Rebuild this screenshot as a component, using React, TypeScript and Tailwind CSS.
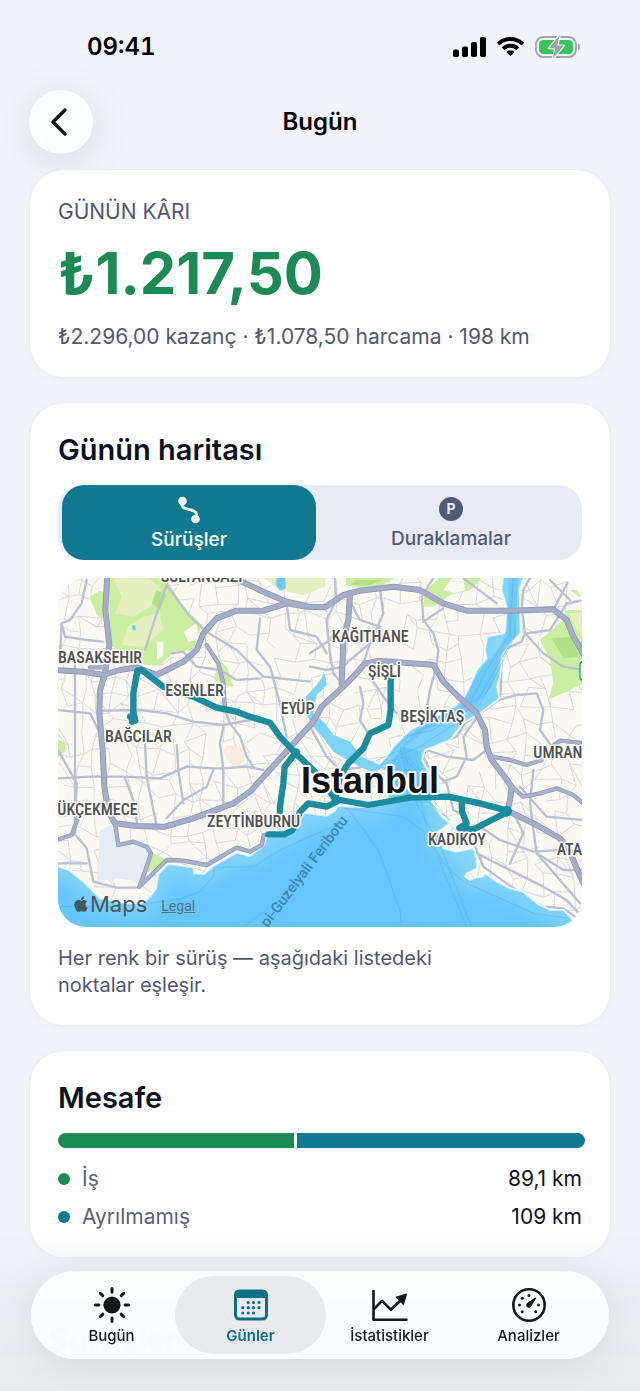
import { FaApple } from "react-icons/fa";

type Road = { d: string };

// Map drawing units: three per pixel of the map panel at its natural width.
const HIGHWAYS: Road[] = [
  { d: "M172 10L166 120L178 225L165 310L150 360L148 430L158 540L163 650L175 725L195 760L260 768L345 770L430 745L550 700L600 665L650 610L700 555L740 510L790 455L815 410L880 350L910 320L945 280L985 273L1150 284L1180 335L1220 375L1280 430L1305 480L1310 530L1325 570L1360 615L1385 650L1380 690L1372 722L1460 765L1530 805L1560 845L1580 895L1600 940" },
  { d: "M10 300L100 305L160 315L210 300L260 292L320 315L400 275L440 240L460 190L500 145L560 122L640 122L710 100L770 110L825 112L880 75L930 62L1030 50L1110 60L1180 100L1250 122L1380 122L1510 118L1550 150L1570 200L1600 250" },
  { d: "M560 28L640 65L710 95L770 108" },
  { d: "M900 70L895 150L880 210L875 340" },
];

const MAIN_ROADS: Road[] = [
  { d: "M470 225L505 280L520 340L525 420" },
  { d: "M1385 650L1420 680L1470 670L1520 655L1570 675L1600 700" },
  { d: "M1325 560L1380 570L1430 585L1475 570" },
  { d: "M195 760L205 825L250 815L290 830L303 850L285 905L268 950L350 870L400 872L470 885L560 833L600 845L635 825L642 795" },
  { d: "M20 810L65 795L85 740" },
  { d: "M1505 530L1530 512L1560 515L1600 520" },
  { d: "M120 292L165 292L165 325" },
];

const STREETS: Road[] = [
  { d: "M350 45L320 130L285 240" },
  { d: "M350 45L420 140L470 185L560 240L640 320L780 335" },
  { d: "M75 268V793L110 835L130 935L200 953L265 953" },
  { d: "M24 625L120 620L225 620L330 625L410 590L490 595L520 595L590 590L640 600" },
  { d: "M350 745L400 690L470 650L490 600" },
  { d: "M225 625L250 690L262 765" },
  { d: "M525 420L540 460L570 500L590 560L610 590" },
  { d: "M158 422L270 420L350 430L430 455L520 465L600 450" },
  { d: "M365 250L400 245L440 290L510 300L560 330L630 325" },
  { d: "M285 520L290 620L310 720L320 770" },
  { d: "M380 525L385 600L400 700" },
  { d: "M35 160L45 200L110 210L160 215" },
  { d: "M110 30L95 100L60 150L35 160L30 260" },
  { d: "M520 470L510 520L520 600L520 700" },
  { d: "M630 145L620 240L660 290L690 400L710 500" },
  { d: "M710 100L720 180L800 200L830 250" },
  { d: "M855 24L858 90L830 150L840 250L850 310L880 345" },
  { d: "M990 60L1000 130L960 220L900 270L880 290" },
  { d: "M900 95L930 150L990 170L960 220L940 280" },
  { d: "M1150 24L1115 80L1120 150L1150 190L1165 240L1160 285L1140 360L1125 450L1070 520" },
  { d: "M1120 155L1180 115" },
  { d: "M930 350L940 400L930 450L960 500" },
  { d: "M960 320L1000 380L1040 430" },
  { d: "M1440 24L1420 60L1415 110L1425 190L1415 215L1370 235L1355 265L1352 370L1345 390L1290 430L1245 460L1220 500L1130 535L1120 560L1135 590L1190 640L1210 720L1230 730" },
  { d: "M1425 190L1480 250L1540 290L1600 300" },
  { d: "M1430 190L1500 180L1550 100L1600 90" },
  { d: "M1345 390L1400 375L1460 370L1480 420L1470 480L1520 550" },
  { d: "M1290 430L1240 500L1250 560L1220 620L1180 635" },
  { d: "M1310 540L1270 570L1190 560L1130 540" },
  { d: "M1280 850L1400 910L1480 950L1550 990L1596 1040" },
  { d: "M1275 830L1300 890L1370 940L1440 990L1480 1010L1540 1015L1590 1050" },
  { d: "M1290 770L1350 810L1450 845L1530 840" },
  { d: "M1450 600L1440 700L1460 850L1540 900L1600 900" },
  { d: "M1460 850L1590 1000" },
  { d: "M1410 650L1490 740L1600 750" },
  { d: "M1390 725L1420 790L1380 880" },
  { d: "M24 420L120 430L150 490" },
  { d: "M24 540L80 640L75 780" },
  { d: "M24 880L110 880" },
  { d: "M780 250L840 210L850 190M780 290L830 300L880 290" },
  { d: "M780 470L830 560L870 600L950 590" },
  { d: "M1240 24L1340 100M1510 120L1560 24M1500 30L1560 90" },
];

// Deterministic mesh of side streets.
const SIDE_STREETS = (() => {
  let seed = 41;
  const rnd = () => {
    seed = (seed * 16807) % 2147483647;
    return seed / 2147483647;
  };
  const step = 46;
  const cols = 36;
  const rows = 25;
  const pts: number[][][] = [];
  for (let r = 0; r < rows; r++) {
    pts.push([]);
    for (let c = 0; c < cols; c++) {
      pts[r].push([
        Math.round(c * step + (rnd() - 0.5) * 38),
        Math.round(r * step + (rnd() - 0.5) * 38),
      ]);
    }
  }
  let d = "";
  for (let r = 0; r < rows - 1; r++) {
    for (let c = 0; c < cols - 1; c++) {
      const [x, y] = pts[r][c];
      if (rnd() < 0.68) d += `M${x} ${y}L${pts[r][c + 1][0]} ${pts[r][c + 1][1]}`;
      if (rnd() < 0.72) d += `M${x} ${y}L${pts[r + 1][c][0]} ${pts[r + 1][c][1]}`;
      if (rnd() < 0.12) d += `M${x} ${y}L${pts[r + 1][c + 1][0]} ${pts[r + 1][c + 1][1]}`;
    }
  }
  return d;
})();

const SEA =
  "M-80 870L20 888L60 902L100 935L150 985L200 995L270 1005L300 980L318 955L325 912L355 882L430 892L432 910L462 912L490 888L560 848L600 858L640 828L652 797L715 797L745 755L765 728L795 733L830 737L855 722L862 708L960 712L1010 690L1025 650L1020 610L980 590L1010 560L1030 530L1080 480L1150 442L1210 412L1240 388L1255 358L1280 300L1310 265L1305 240L1312 200L1365 190L1370 110L1355 60L1365 -40H1440L1408 60L1412 190L1370 230L1355 260L1350 320L1340 350L1348 385L1290 430L1240 458L1200 510L1125 540L1115 570L1140 615L1170 665L1145 695L1175 740L1200 760L1165 785L1180 835L1220 845L1270 835L1280 865L1280 895L1250 910L1245 920L1260 930L1280 922L1298 920L1305 910L1340 935L1380 955L1420 965L1460 1000L1500 1020L1540 1020L1565 1045L1640 1180H-80Z";

const GOLDEN_HORN =
  "M768 380L800 345L825 310L830 345L800 375L790 430L825 460L850 495L900 515L935 560L1000 590L970 610L900 575L850 545L825 510L790 470L768 430Z";

const ROUTES = [
  "M246 455L250 440L250 370L262 302L275 300L340 350L430 380L500 413L560 425L600 440L660 458L690 500L735 548L800 610L857 690",
  "M240 440L256 452L250 425",
  "M740 545L704 590L700 640L690 710L688 765",
  "M655 793H705L728 780L735 765L750 725L775 700L830 710L870 690L955 705L1040 690L1080 683L1195 680L1290 700L1372 722",
  "M1235 695L1236 725L1250 760L1228 774L1270 778L1372 726",
  "M1022 320L1022 420L1015 465L960 490L940 535L925 550L895 580L870 620L855 690",
];

const DISTRICTS = [
  { name: "SULTANGAZI", x: 332, y: 37 },
  { name: "BASAKSEHIR", x: 24, y: 278 },
  { name: "ESENLER", x: 346, y: 379 },
  { name: "BAĞCILAR", x: 165, y: 517 },
  { name: "EYÜP", x: 692, y: 432 },
  { name: "KAĞITHANE", x: 845, y: 217 },
  { name: "ŞİŞLİ", x: 954, y: 320 },
  { name: "BEŞİKTAŞ", x: 1051, y: 457 },
  { name: "UMRAN", x: 1450, y: 565 },
  { name: "ATA", x: 1520, y: 855 },
  { name: "ÜKÇEKMECE", x: 22, y: 736 },
  { name: "ZEYTİNBURNU", x: 471, y: 771 },
  { name: "KADIKOY", x: 1134, y: 825 },
];

function DayMap() {
  return (
    <svg viewBox="24 24 1572 1047" className="block w-full" role="img" aria-label="Istanbul">
      <defs>
        <linearGradient id="sea" x1="0" y1="0" x2="0.3" y2="1">
          <stop offset="0" stopColor="#66c5f9" />
          <stop offset="1" stopColor="#67c6fc" />
        </linearGradient>
        <clipPath id="sea-clip">
          <path d={SEA} />
        </clipPath>
        <filter id="shallow" x="-10%" y="-10%" width="120%" height="120%">
          <feGaussianBlur stdDeviation="28" />
        </filter>
      </defs>
      <rect x="0" y="0" width="1620" height="1100" fill="#fafaf2" />
      <path d={SIDE_STREETS} fill="none" stroke="#d3d1dc" strokeWidth="2.5" />

      <path d="M530 525L575 530L585 570L560 590L535 575L520 545Z" fill="#fbeade" />
      <path d="M150 780L190 762L205 825L292 832L300 850L270 935L200 925L140 935Z" fill="#e6ecf6" />
      <g fill="#cbefa0">
        <path d="M176 20H345L400 110L455 165L430 240L370 245L330 288L290 285L240 265L180 225Z" />
        <path d="M120 80L150 62L172 70L168 150L140 135Z" />
        <path d="M500 265L530 290L550 350L495 345Z" />
        <path d="M888 45V20H1040L1000 45L930 55Z" />
        <path d="M1120 110L1125 65L1170 20H1300L1260 60L1200 75L1150 110Z" />
        <path d="M1470 210L1540 150L1550 120L1600 120V340L1540 370L1495 388L1510 340L1500 270Z" />
        <path d="M24 510L46 515L46 545L24 560Z" />
        <path d="M305 847L350 870L285 915Z" />
        <path d="M1560 60L1600 90V60Z" />
      </g>
      <g fill="#e5efc0">
        <path d="M190 24H300L335 60L300 110L250 140L195 130L215 80Z" />
        <path d="M640 24H825V50L760 75L690 60Z" />
        <path d="M280 140L330 130L340 180L280 230L215 225L235 170Z" />
        <path d="M1555 130L1600 125V190L1580 180Z" />
        <path d="M780 24H830L800 55L780 60Z" />
      </g>
      <g fill="#aee284">
        <path d="M320 60L350 75L330 120L305 100Z" />
        <path d="M1505 205L1560 200L1590 260L1540 265Z" />
        <path d="M900 45L920 30L1000 30L960 45Z" />
      </g>
      <path d="M400 185L440 160L445 210L415 215ZM320 215L340 215V255L322 270Z M1180 60L1205 25L1240 24L1245 60L1215 70Z" fill="#fafaf2" />
      <path d="M246 168L256 164V182L248 180ZM680 20H705L708 55L690 62L678 45Z" fill="#6cc8f8" />

      <g fill="none" stroke="#bcbfd2" strokeLinejoin="round" strokeLinecap="round" strokeWidth="7">
        {STREETS.map((road) => (
          <path key={road.d} d={road.d} />
        ))}
      </g>

      <path d={SEA} fill="url(#sea)" stroke="#ffffff" strokeWidth="6" strokeLinejoin="round" />
      <g clipPath="url(#sea-clip)">
        <path d={SEA} fill="none" stroke="#94dff9" strokeWidth="56" opacity="0.7" filter="url(#shallow)" />
      </g>
      <path d={GOLDEN_HORN} fill="#7bd3f8" />
      <path d="M1588 220L1600 210V270L1586 250Z" fill="#7bd3f8" />
      <g fill="#59bbf5" opacity="0.45">
        <path d="M1375 24H1405L1395 110L1398 195L1350 260L1325 350L1270 415L1130 480L1050 540L1100 480L1230 410L1290 300L1350 230L1372 180Z" />
        <path d="M1025 570L1060 530L1110 545L1120 600L1160 670L1100 660L1040 650Z" />
      </g>
      <g fill="none" stroke="#4ea3d3" strokeWidth="2" opacity="0.55">
        <path d="M1390 24L1380 190L1310 300L1260 400L1060 510L990 590" />
        <path d="M1400 60L1395 200L1330 330L1280 420L1110 530L1040 560" />
        <path d="M1375 120L1385 210L1290 380L1150 480L1060 500" />
        <path d="M960 580L1050 540L1110 600L1150 690L1200 755" />
        <path d="M1050 530L1080 640L1115 700L1130 780L1250 1071" />
        <path d="M1060 530L1100 700L1180 850L1265 1071" />
        <path d="M870 705L900 725L985 840L1050 1020L1055 1071" />
        <path d="M885 715L1060 740L1130 790L1180 880L1240 935L1450 1030L1560 1045" />
        <path d="M500 892L610 890L700 835L870 760" />
        <path d="M580 1071L700 980L885 725" />
        <path d="M24 1010L200 1010L380 990L450 965L490 920L492 888" />
        <path d="M980 590L1060 560L1130 640L1170 690M1010 600L1130 690L1200 750" />
      </g>

      <g fill="none" strokeLinejoin="round" strokeLinecap="round">
        {MAIN_ROADS.map((road) => (
          <path key={road.d} d={road.d} stroke="#8e96b5" strokeWidth="13" />
        ))}
        {HIGHWAYS.map((road) => (
          <path key={road.d} d={road.d} stroke="#8e96b5" strokeWidth="18" />
        ))}
        {MAIN_ROADS.map((road) => (
          <path key={road.d} d={road.d} stroke="#a9b0ca" strokeWidth="9" />
        ))}
        {HIGHWAYS.map((road) => (
          <path key={road.d} d={road.d} stroke="#a5adc9" strokeWidth="13" />
        ))}
      </g>

      <g fill="none" stroke="#1a8c9d" strokeWidth="19" strokeLinejoin="round" strokeLinecap="round">
        {ROUTES.map((d) => (
          <path key={d} d={d} />
        ))}
      </g>
      <circle cx="1370" cy="724" r="16" fill="#1a8c9d" />
      <rect x="1590" y="276" width="30" height="54" rx="8" fill="#ffffff" stroke="#1c9c84" strokeWidth="4" />

      <g
        className="font-['Roboto_Condensed','Roboto',sans-serif] font-medium [paint-order:stroke]"
        fill="#4f5154"
        stroke="#fbfbf6"
        strokeWidth="9"
        strokeLinejoin="round"
        fontSize="48"
      >
        {DISTRICTS.map((place) => (
          <text key={place.name} x={place.x} y={place.y}>
            {place.name}
          </text>
        ))}
      </g>
      <text
        x="895"
        y="752"
        textAnchor="end"
        transform="rotate(-53 895 752)"
        className="font-['Roboto',sans-serif] font-medium"
        fontSize="44"
        fill="#3c86b3"
      >
        pi-Guzelyali Feribotu
      </text>
      <text
        x="960"
        y="670"
        textAnchor="middle"
        className="font-['Liberation_Sans',sans-serif] font-bold [paint-order:stroke]"
        fontSize="108"
        fill="#131313"
        stroke="#ffffff"
        strokeWidth="12"
        strokeLinejoin="round"
      >
        Istanbul
      </text>
    </svg>
  );
}

function StatusBar() {
  return (
    <div className="flex h-[90px] items-center justify-between pt-1 pr-[59px] pl-[87px]">
      <time className="text-2xl font-semibold tabular-nums">09:41</time>
      <div className="flex items-center gap-[11px]">
        <svg width="33" height="20" viewBox="0 0 33 20" aria-hidden="true">
          <rect x="0" y="12.5" width="6" height="7.5" rx="1.8" />
          <rect x="9" y="9.5" width="6" height="10.5" rx="1.8" />
          <rect x="18" y="5" width="6" height="15" rx="1.8" />
          <rect x="27" y="0" width="6" height="20" rx="1.8" />
        </svg>
        <svg width="27" height="20" viewBox="0 0 27 20" aria-hidden="true">
          <path d="M13.5 0C8.4 0 3.700 1.950 .3 5.200c-.3.300-.3.700 0 1l1.800 1.800c.3.300.7.300 1 0 2.800-2.600 6.400-4 10.400-4s7.600 1.400 10.400 4c.3.300.7.300 1 0l1.800-1.800c.3-.3.300-.7 0-1C23.300 1.950 18.600 0 13.500 0Z" />
          <path d="M13.500 6.800c-3.200 0-6.100 1.200-8.300 3.200-.3.300-.3.700 0 1l1.900 1.800c.3.300.7.300 1 0 1.500-1.300 3.300-2 5.400-2s3.900.7 5.400 2c.3.300.7.300 1 0l1.900-1.800c.3-.3.300-.7 0-1-2.200-2-5.100-3.200-8.300-3.200Z" />
          <path d="M13.500 13.300c-1.400 0-2.600.4-3.600 1.200-.4.300-.4.700-.1 1l3.200 3.300c.3.300.7.300 1 0l3.200-3.300c.3-.3.300-.7-.1-1-1-.8-2.200-1.200-3.600-1.200Z" />
        </svg>
        <svg width="46" height="24" viewBox="0 0 46 24" aria-hidden="true">
          <rect x="1" y="2" width="40" height="20" rx="7" fill="none" stroke="#a2a4a9" strokeWidth="1.800" />
          <path d="M43 8.500c1.500.6 2.200 2 2.200 3.500s-.7 2.900-2.200 3.500Z" fill="#a2a4a9" />
          <rect x="4" y="5" width="34" height="14" rx="4.500" fill="#35c759" />
          <path
            d="M24.500.5L14 13.200h6.300L18 23.500 28.800 10.600h-6.500Z"
            fill="#9fa3a5"
            stroke="#f2f3fb"
            strokeWidth="2.400"
            strokeLinejoin="round"
            className="[paint-order:stroke]"
          />
        </svg>
      </div>
    </div>
  );
}

const CARD =
  "rounded-[34px] bg-white px-7 shadow-[0_0_0_1px_#ecedf2,0_2px_10px_rgba(20,24,60,0.03)]";

const DISTANCES = [
  { label: "İş", value: "89,1 km", dot: "bg-[#1b8a54]" },
  { label: "Ayrılmamış", value: "109 km", dot: "bg-[#10798f]" },
];

function SunIcon() {
  return (
    <svg width="36" height="36" viewBox="0 0 36 36" aria-hidden="true">
      <circle cx="18" cy="18" r="8.600" fill="currentColor" />
      <g stroke="currentColor" strokeWidth="3" strokeLinecap="round">
        <path d="M18 1.500v3.400M18 31.100v3.400M1.500 18h3.400M31.100 18h3.400M6.300 6.300l2.500 2.500M27.200 27.200l2.500 2.500M6.300 29.700l2.500-2.500M27.200 8.800l2.500-2.500" />
      </g>
    </svg>
  );
}

function CalendarIcon() {
  return (
    <svg width="36" height="36" viewBox="0 0 36 36" aria-hidden="true">
      <rect x="2.500" y="4" width="31" height="28" rx="4" fill="none" stroke="currentColor" strokeWidth="3" />
      <path d="M2 11V7a4 4 0 0 1 4-4h24a4 4 0 0 1 4 4v4Z" fill="currentColor" />
      <g fill="currentColor">
        <circle cx="15.200" cy="15.500" r="1.600" />
        <circle cx="20.500" cy="15.500" r="1.600" />
        <circle cx="26" cy="15.500" r="1.600" />
        <circle cx="9.800" cy="20.700" r="1.600" />
        <circle cx="15.200" cy="20.700" r="1.600" />
        <circle cx="20.500" cy="20.700" r="1.600" />
        <circle cx="26" cy="20.700" r="1.600" />
        <circle cx="9.800" cy="26" r="1.600" />
        <circle cx="15.200" cy="26" r="1.600" />
        <circle cx="20.500" cy="26" r="1.600" />
      </g>
    </svg>
  );
}

function TrendIcon() {
  return (
    <svg width="38" height="36" viewBox="0 0 38 36" fill="none" aria-hidden="true">
      <g stroke="currentColor" strokeWidth="2.600" strokeLinecap="round" strokeLinejoin="round">
        <path d="M2.500 4v28.700h33" />
        <path d="M3 22l8-8.200 9 9L31 12" />
      </g>
      <path d="M25.300 9.400l10-3c.6-.1 1 .3.800.9l-3 10c-.2.700-.8.800-1.300.3l-6.800-6.900c-.5-.5-.4-1.100.3-1.300Z" fill="currentColor" />
    </svg>
  );
}

function GaugeIcon() {
  return (
    <svg width="36" height="36" viewBox="0 0 36 36" aria-hidden="true">
      <circle cx="18" cy="18" r="15.700" fill="none" stroke="currentColor" strokeWidth="2.600" />
      <g fill="currentColor">
        <path d="M24.300 10.600c.6-.5 1.200.1.800.8l-4.600 7.500c-1 1.700-3.200 2.400-4.600 1.100-1.300-1.300-.8-3.400.8-4.500Z" />
        <circle cx="18" cy="8.500" r="1.500" />
        <circle cx="11.300" cy="11.300" r="1.500" />
        <circle cx="8.500" cy="18" r="1.500" />
        <circle cx="11.300" cy="24.700" r="1.500" />
        <circle cx="24.700" cy="24.700" r="1.500" />
        <circle cx="27.500" cy="18" r="1.500" />
      </g>
    </svg>
  );
}

const TABS = [
  { label: "Bugün", icon: <SunIcon />, active: false },
  { label: "Günler", icon: <CalendarIcon />, active: true },
  { label: "İstatistikler", icon: <TrendIcon />, active: false },
  { label: "Analizler", icon: <GaugeIcon />, active: false },
];

export default function App() {
  return (
    <div className="min-h-screen bg-[#f2f3fb] font-['Inter',sans-serif] text-black">
      <StatusBar />
      <header className="grid grid-cols-[64px_1fr_64px] items-center px-[29px]">
        <button
          type="button"
          aria-label="Geri"
          className="flex size-16 items-center justify-center rounded-full bg-[#fcfdff] text-[#16171a] shadow-[0_6px_44px_rgba(0,0,0,0.11)]"
        >
          <svg width="20" height="30" viewBox="0 0 20 30" fill="none" aria-hidden="true" className="mr-1">
            <path d="M16 3L4 15l12 12" stroke="currentColor" strokeWidth="3.400" strokeLinecap="round" strokeLinejoin="round" />
          </svg>
        </button>
        <h1 className="text-center text-2xl font-semibold">Bugün</h1>
      </header>

      <main className="flex flex-col gap-[26px] px-[30px] pt-4">
        <section className={`${CARD} pt-[27px] pb-[26px]`}>
          <h2 className="text-[21px] leading-[30px] text-[#505873]">GÜNÜN KÂRI</h2>
          <p className="mt-2 text-[58px] leading-[76px] font-bold text-[#1b8a54]">₺1.217,50</p>
          <p className="mt-3 text-[21px] leading-[28px] text-[#505873]">
            ₺2.296,00 kazanç · ₺1.078,50 harcama · 198 km
          </p>
        </section>

        <section className={`${CARD} pt-7 pb-[26px]`}>
          <h2 className="text-[29px] leading-[38px] font-semibold text-[#0c1124]">Günün haritası</h2>
          <div className="mt-4 grid grid-cols-2 rounded-3xl bg-[#e8ebf5]">
            <button
              type="button"
              aria-pressed="true"
              className="mx-1 flex h-[75px] flex-col items-center rounded-[22px] bg-[#10798f] pt-[11px] text-[19px] leading-6 font-medium text-white"
            >
              <svg width="26" height="28" viewBox="0 0 26 28" fill="none" aria-hidden="true" className="mb-1 shrink-0">
                <path d="M6 5v3.500c0 7 14.500 3.500 14.500 10V23" stroke="currentColor" strokeWidth="2.800" strokeLinecap="round" />
                <circle cx="6.500" cy="5" r="4.300" fill="currentColor" />
                <circle cx="19.500" cy="23" r="4.300" fill="currentColor" />
              </svg>
              Sürüşler
            </button>
            <button
              type="button"
              aria-pressed="false"
              className="flex h-[75px] flex-col items-center pt-3 text-[19px] leading-6 font-medium text-[#505a74]"
            >
              <span aria-hidden="true" className="mb-1.5 flex size-6 items-center justify-center rounded-full bg-[#505a74] text-sm font-bold text-[#e8ebf5]">
                P
              </span>
              Duraklamalar
            </button>
          </div>
          <div className="relative mt-[18px] overflow-hidden rounded-[28px]">
            <DayMap />
            <div className="absolute bottom-2 left-[14px] flex items-center text-[#46565f]">
              <FaApple className="size-[18px]" aria-hidden="true" />
              <span className="text-[22px] leading-[30px]">Maps</span>
              <a href="#legal" className="ml-3.5 pt-1 font-['Roboto',sans-serif] text-sm text-[#4f7182] underline">
                Legal
              </a>
            </div>
          </div>
          <p className="mt-[18px] max-w-[440px] text-[20px] leading-[27px] text-[#505873]">
            Her renk bir sürüş — aşağıdaki listedeki noktalar eşleşir.
          </p>
        </section>

        <section className={`${CARD} pt-7 pb-[21px]`}>
          <h2 className="text-[29px] leading-[38px] font-semibold text-[#0c1124]">Mesafe</h2>
          <div className="mt-4 -mr-[3px] flex h-[15px] gap-[3px] overflow-hidden rounded-full">
            <div className="bg-[#1b8a54]" style={{ flexGrow: 89.1 }} />
            <div className="bg-[#10798f]" style={{ flexGrow: 109 }} />
          </div>
          <dl className="mt-3 text-[21px] leading-[38px]">
            {DISTANCES.map((row) => (
              <div key={row.label} className="flex items-center">
                <span className={`mr-3 size-3 rounded-full ${row.dot}`} />
                <dt className="text-[#5a617b]">{row.label}</dt>
                <dd className="ml-auto text-[#0c1124]">{row.value}</dd>
              </div>
            ))}
          </dl>
        </section>

        <h2 className="relative z-10 pt-[34px] pl-[18px] text-[32px] leading-[48px] font-semibold text-[#8f9cca]">
          Sürüşler
        </h2>
      </main>

      <div className="pointer-events-none fixed inset-x-0 bottom-0 h-40 bg-linear-to-t from-[#e9eaee] via-[#ebecf0]/80 via-60% to-transparent" />
      <nav className="fixed inset-x-[31px] bottom-8 z-20 grid grid-cols-4 rounded-full bg-[#fcfdff]/95 px-[11px] py-[5px] shadow-[0_8px_44px_rgba(0,0,0,0.08)] backdrop-blur-[2px]">
        {TABS.map((tab) => (
          <a
            key={tab.label}
            href="#"
            aria-current={tab.active ? "page" : undefined}
            className={
              tab.active
                ? "-mx-1.5 flex h-[78px] flex-col items-center rounded-full bg-[#e9eaed] pt-[11px] text-[15px] leading-5 font-semibold text-[#0b7086]"
                : "-mx-1.5 flex h-[78px] flex-col items-center rounded-full pt-[11px] text-[15px] leading-5 font-medium text-[#16171a]"
            }
          >
            {tab.icon}
            <span className="mt-[3px]">{tab.label}</span>
          </a>
        ))}
      </nav>
    </div>
  );
}
